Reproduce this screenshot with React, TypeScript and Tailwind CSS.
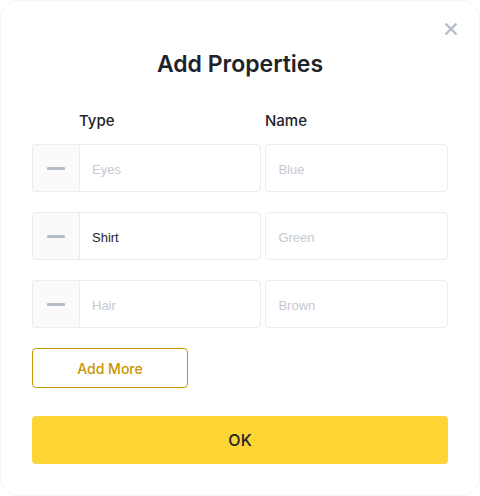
import React from "react";

const rows = [
  { type: "Eyes", typeFilled: false, name: "Blue" },
  { type: "Shirt", typeFilled: true, name: "Green" },
  { type: "Hair", typeFilled: false, name: "Brown" },
];

export default function App() {
  return (
    <div className="w-[480px] h-[496px] bg-white rounded-[20px] border border-[#f6f6f6] relative" style={{ fontFamily: "Inter, 'Liberation Sans', sans-serif" }}>
      <button className="absolute right-[21px] top-[21px] w-[14px] h-[14px] text-[#B7BDC6]">
        <svg viewBox="0 0 14 14" width="14" height="14" fill="none" stroke="currentColor" strokeWidth="2.4" strokeLinecap="butt">
          <path d="M1.5 1.5L12.5 12.5M12.5 1.5L1.5 12.5" />
        </svg>
      </button>
      <div className="flex flex-col px-[31px] pt-[48px]">
        <h1 className="text-center text-[23px] leading-[30px] font-semibold text-[#1E2329]">Add Properties</h1>
        <div className="flex mt-[31px] h-[22px] items-center text-[15px] font-medium text-[#1E2329]">
          <div className="w-[233px] pl-[47px]">Type</div>
          <div>Name</div>
        </div>
        <div className="flex flex-col gap-[20px] mt-[12px]">
          {rows.map((r) => (
            <div key={r.type} className="flex gap-[4px] h-[48px]">
              <div className="w-[230px] flex border border-[#EAECEF] rounded-[4px] overflow-hidden">
                <div className="w-[47px] shrink-0 bg-[#FAFAFA] border-r border-[#EAECEF] flex items-center justify-center">
                  <div className="w-[18px] h-[3px] bg-[#B7BDC6] rounded-[1px]" />
                </div>
                <div
                  className={`flex items-center pl-[12px] pt-[3px] text-[13px] ${r.typeFilled ? "text-[#1E2329]" : "text-[#C5C9D1]"}`}
                  style={{ fontFamily: "'Liberation Sans', Arial, sans-serif" }}
                >
                  {r.type}
                </div>
              </div>
              <div
                className="w-[183px] border border-[#EAECEF] rounded-[4px] flex items-center pl-[12px] pt-[3px] text-[13px] text-[#C5C9D1]"
                style={{ fontFamily: "'Liberation Sans', Arial, sans-serif" }}
              >
                {r.name}
              </div>
            </div>
          ))}
        </div>
        <button className="mt-[20px] w-[156px] h-[40px] border border-[#C99400] rounded-[4px] text-[14px] font-medium text-[#C99400] flex items-center justify-center">
          Add More
        </button>
        <button className="mt-[28px] w-[416px] h-[48px] bg-[#FCD535] rounded-[4px] text-[16px] font-medium text-[#1E2329] flex items-center justify-center">
          OK
        </button>
      </div>
    </div>
  );
}
